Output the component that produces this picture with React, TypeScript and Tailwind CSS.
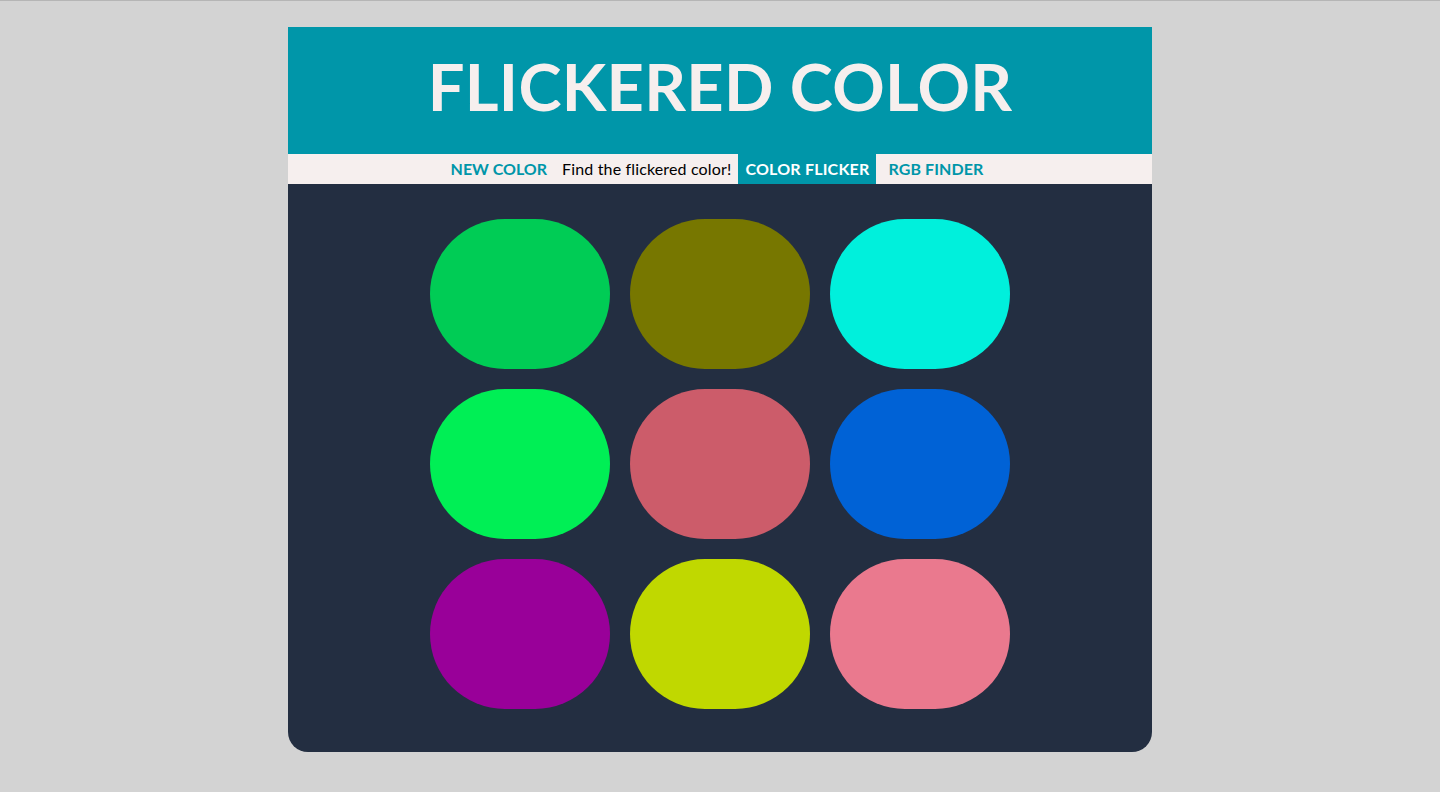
const colors = [
  "#00cc55",
  "#777700",
  "#00f0dc",
  "#00ef55",
  "#cc5c6a",
  "#0062d6",
  "#990099",
  "#c0d800",
  "#ea798e",
];

export default function App() {
  return (
    <div className="min-h-screen w-full bg-[#d3d3d3] border-t border-[#b5b5b5] pt-[26px] font-['Lato',sans-serif]">
      <div className="mx-auto w-[864px] rounded-b-[20px] overflow-hidden bg-[#232e41]">
        <header className="h-[127px] bg-[#0096a9] flex items-center justify-center pb-[9px]">
          <h1 className="text-[#f6efee] text-[65px] font-bold tracking-[0.3px] leading-none">
            FLICKERED COLOR
          </h1>
        </header>
        <nav className="h-[30px] bg-[#f6efee] flex items-stretch justify-center text-[16px]">
          <button className="px-[6px] font-bold text-[#0096a9]">NEW COLOR</button>
          <span className="pl-[9px] pr-[7px] flex items-center text-black tracking-[0.15px]">Find the flickered color!</span>
          <button className="px-[7px] font-bold text-white bg-[#0096a9] tracking-[0.2px]">COLOR FLICKER</button>
          <button className="px-[12px] font-bold text-[#0096a9] tracking-[0.1px]">RGB FINDER</button>
        </nav>
        <div className="pt-[35px] pb-[43px] flex justify-center">
          <div className="grid grid-cols-3 gap-[20px]">
            {colors.map((c) => (
              <div
                key={c}
                className="w-[180px] h-[150px] rounded-full"
                style={{ backgroundColor: c }}
              />
            ))}
          </div>
        </div>
      </div>
    </div>
  );
}
